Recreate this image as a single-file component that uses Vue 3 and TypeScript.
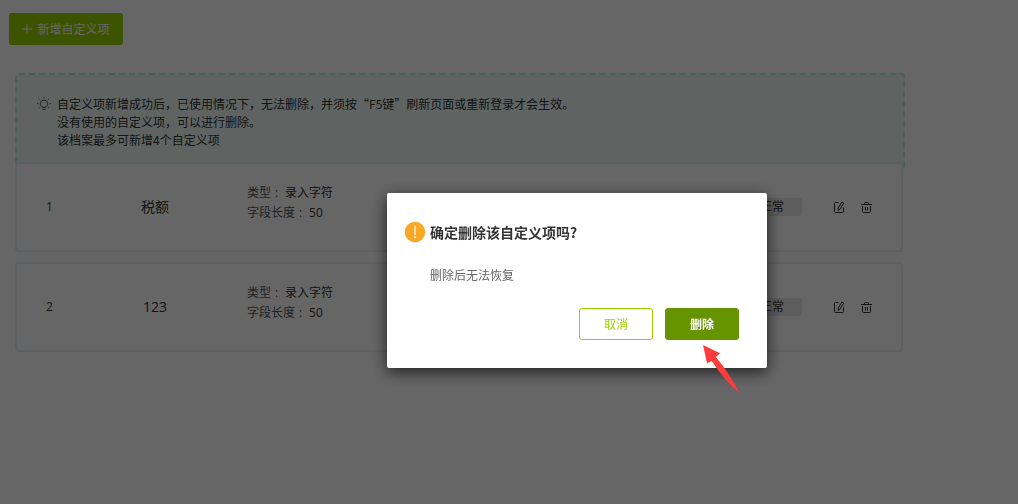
<script setup lang="ts">
import { ref } from 'vue'

interface CustomField {
  id: number
  name: string
  type: string
  length: number
  status: string
}

const notices: string[] = [
  '自定义项新增成功后，已使用情况下，无法删除，并须按“F5键”刷新页面或重新登录才会生效。',
  '没有使用的自定义项，可以进行删除。',
  '该档案最多可新增4个自定义项',
]

const fields = ref<CustomField[]>([
  { id: 1, name: '税额', type: '录入字符', length: 50, status: '正常' },
  { id: 2, name: '123', type: '录入字符', length: 50, status: '正常' },
])
</script>

<template>
  <div class="page" lang="zh-CN">
    <main class="content">
      <button class="add" type="button">
        <svg width="10" height="10" viewBox="0 0 10 10" aria-hidden="true">
          <path d="M5 0v10M0 5h10" stroke="currentColor" stroke-width="1" fill="none" />
        </svg>
        新增自定义项
      </button>

      <section class="notice">
        <svg class="bulb" width="14" height="14" viewBox="0 0 14 14" fill="none" stroke="currentColor" aria-hidden="true">
          <path d="M5.300 10.500V9.700C4.100 9.200 3.300 8.200 3.300 6.800a3.700 3.700 0 0 1 7.400 0c0 1.400-.8 2.400-2 2.900v.8zM5.500 12.500h3" />
          <path d="M7 0v1.300M2 1.800l.9.900M12 1.800l-.9.9M0 6.500h1.300M12.700 6.500H14M2 11.200l.8-.8M12 11.200l-.8-.8" />
        </svg>
        <div>
          <p v-for="line in notices" :key="line">{{ line }}</p>
        </div>
      </section>

      <ul class="list">
        <li v-for="field in fields" :key="field.id" class="card">
          <span class="index">{{ field.id }}</span>
          <span class="name">{{ field.name }}</span>
          <dl class="details">
            <div><dt>类型<span class="colon">:</span></dt><dd>{{ field.type }}</dd></div>
            <div><dt>字段长度<span class="colon">:</span></dt><dd>{{ field.length }}</dd></div>
          </dl>
          <span class="status">{{ field.status }}</span>
          <div class="actions">
            <button type="button" aria-label="编辑">
              <svg width="14" height="14" viewBox="0 0 14 14" fill="none" stroke="currentColor" aria-hidden="true">
                <path d="M6.500 2.500h-3q-1 0-1 1v8q0 1 1 1h7q1 0 1-1V7.500" />
                <path d="M9.800 2l1.900 1.100-3.600 6-2 1.400.2-2.500z" />
              </svg>
            </button>
            <button type="button" aria-label="删除">
              <svg width="14" height="14" viewBox="0 0 14 14" fill="none" stroke="currentColor" aria-hidden="true">
                <path d="M1 4.500h11M4.500 4.500V3.300q0-.8.8-.8h2.400q.8 0 .8.800v1.200" />
                <path d="M2.500 6v5.500q0 1 1 1h6q1 0 1-1V6M5.500 7v3.500M7.500 7v3.500" />
              </svg>
            </button>
          </div>
        </li>
      </ul>
    </main>

    <div class="mask">
      <div class="dialog" role="alertdialog" aria-modal="true" aria-labelledby="dialog-title" aria-describedby="dialog-text">
        <header class="heading">
          <svg width="22" height="22" viewBox="0 0 22 22" aria-hidden="true">
            <circle cx="11" cy="11" r="10.300" fill="#f9a825" />
            <path d="M11 5v8.500" stroke="#fff" stroke-width="1.200" stroke-linecap="round" />
            <circle cx="11" cy="16.300" r="1.100" fill="#fff" />
          </svg>
          <h2 id="dialog-title">确定删除该自定义项吗?</h2>
        </header>
        <p id="dialog-text" class="message">删除后无法恢复</p>
        <footer class="buttons">
          <button class="cancel" type="button">取消</button>
          <button class="confirm" type="button">删除</button>
        </footer>
        <svg class="pointer" width="38" height="49" viewBox="0 0 38 49" aria-hidden="true">
          <path d="M0 0L17 8.300L12.800 12Q25 26 36.700 48.500Q21 35 8.700 16L4 18.200Z" fill="#fd3b3b" />
        </svg>
      </div>
    </div>
  </div>
</template>

<style>
body {
  margin: 0;
}
</style>

<style scoped>
.page {
  min-height: 100vh;
  background: #fff;
  color: #333;
  font-family: "Noto Sans CJK SC", "Liberation Sans", sans-serif;
  font-size: 12px;
  line-height: 18px;
}

button {
  font: inherit;
  cursor: pointer;
}

p,
h2,
dl,
dd,
ul {
  margin: 0;
  padding: 0;
}

svg {
  display: block;
  flex: none;
}

.content {
  padding: 13px 113px 24px 9px;
}

.add {
  display: flex;
  align-items: center;
  justify-content: center;
  gap: 5px;
  width: 114px;
  height: 32px;
  padding: 0;
  border: 0;
  border-radius: 3px;
  background: #96cf00;
  color: #fff;
}

.notice {
  display: flex;
  gap: 6px;
  margin: 28px 0 0 6px;
  padding: 20px;
  border: 2px dashed #b4f0d6;
  border-radius: 4px;
  background: #eefaf7;
  color: #333;
}

.bulb {
  margin-top: 2px;
  color: #555;
}

.list {
  display: flex;
  flex-direction: column;
  gap: 10px;
  position: relative;
  margin: -9px 2px 0 6px;
  list-style: none;
}

.card {
  display: grid;
  grid-template-columns: 65px 146px 1fr 60px auto;
  align-items: center;
  box-sizing: border-box;
  min-height: 90px;
  padding-right: 27px;
  border: 2px solid #e6f0f6;
  border-radius: 4px;
  background: #fff;
  font-family: "Open Sans", "Noto Sans CJK SC", sans-serif;
}

.index,
.name,
.status {
  text-align: center;
}

.name {
  font-size: 14px;
}

.details {
  padding: 0 0 8px 19px;
  line-height: 20px;
}

.details div {
  display: flex;
}

.details dt {
  color: #555;
}

.details dd {
  color: #333;
}

.colon {
  display: inline-block;
  box-sizing: border-box;
  width: 14px;
  padding-left: 4px;
}

.status {
  border-radius: 3px;
  background: #e8e8e8;
}

.actions {
  display: flex;
  gap: 14px;
  margin-left: 30px;
}

.actions button {
  padding: 0;
  border: 0;
  background: none;
  color: #333;
}

.mask {
  position: fixed;
  inset: 0;
  display: flex;
  align-items: flex-start;
  justify-content: center;
  padding: 193px 0 0 136px;
  background: rgba(0, 0, 0, 0.6);
}

.dialog {
  position: relative;
  box-sizing: border-box;
  width: 380px;
  padding: 28px 28px 28px 17px;
  border-radius: 2px;
  background: #fff;
  box-shadow: 0 4px 16px rgba(0, 0, 0, 0.7);
}

.heading {
  display: flex;
  align-items: center;
  gap: 4px;
}

.heading h2 {
  font-size: 14px;
  font-weight: 700;
  line-height: 20px;
}

.message {
  margin: 23px 0 24px 26px;
  color: #666;
}

.buttons {
  display: flex;
  justify-content: flex-end;
  gap: 12px;
}

.buttons button {
  box-sizing: border-box;
  width: 74px;
  height: 32px;
  padding: 0;
  border: 1px solid #99d100;
  border-radius: 3px;
}

.buttons .cancel {
  background: #fff;
  color: #99d100;
}

.buttons .confirm {
  border-color: #669400;
  background: #669400;
  color: #fff;
  font-weight: 700;
}

.pointer {
  position: absolute;
  left: 316px;
  top: 152px;
  pointer-events: none;
}
</style>
